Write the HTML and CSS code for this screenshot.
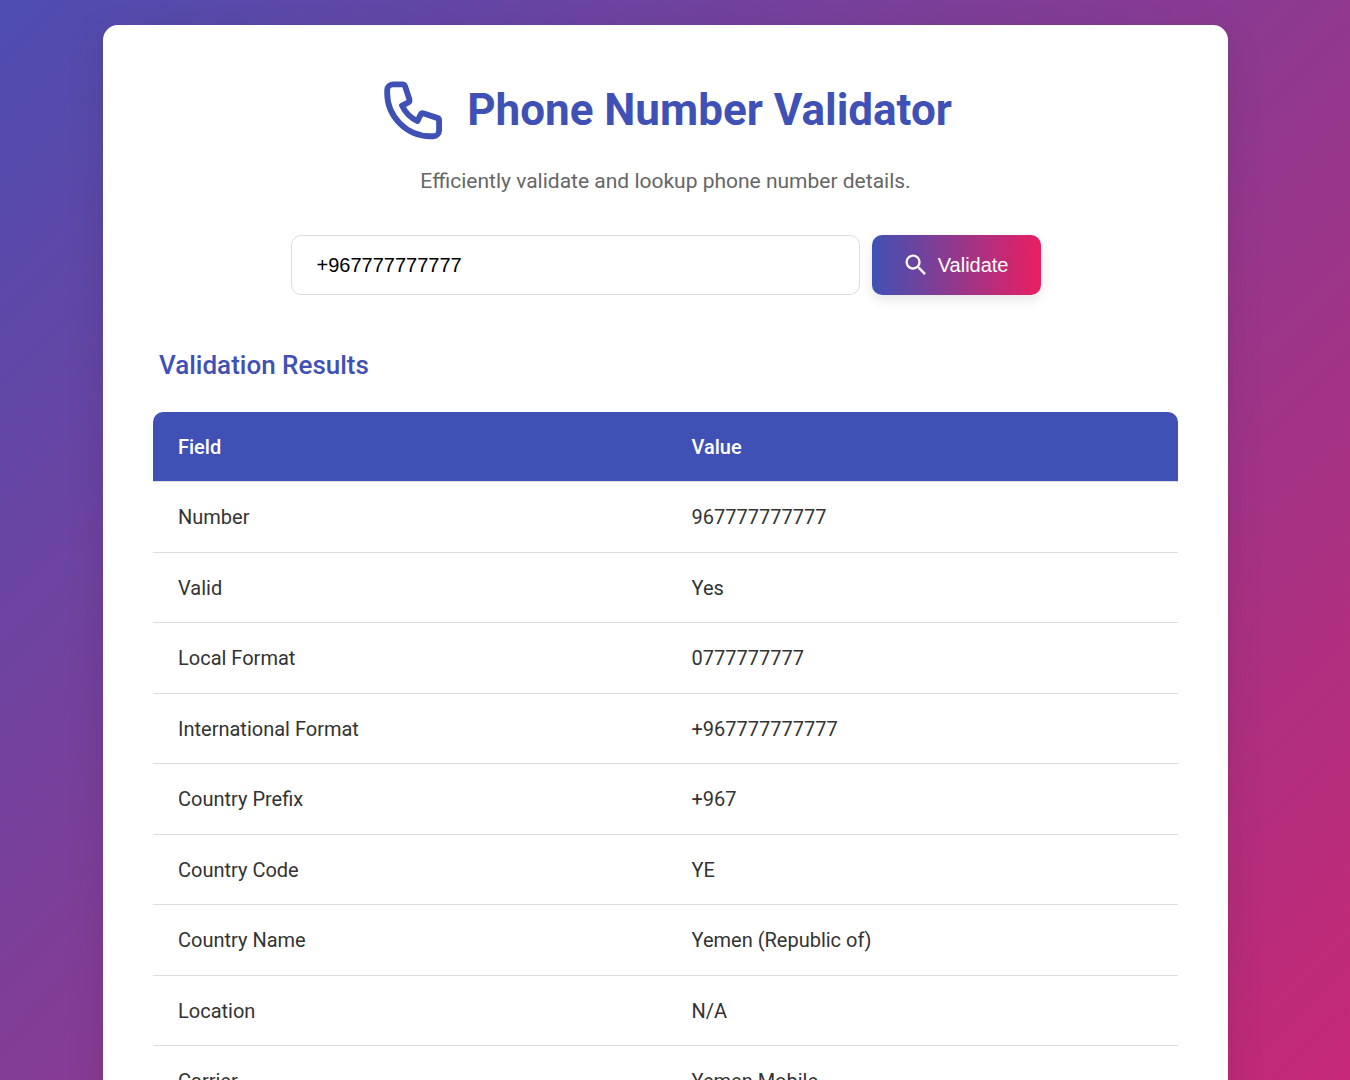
FILE: index.html
```html
<!DOCTYPE html>
<html lang="en">
<head>
<meta charset="utf-8">
<meta name="viewport" content="width=device-width, initial-scale=1">
<title>Phone Number Validator</title>
<link rel="stylesheet" href="styles.css">
</head>
<body>
<main class="container">
  <header class="header">
    <h1 class="title">
      <svg class="phone-icon" viewBox="0.3 0.3 24 24" aria-hidden="true"><path d="M5.1 3.5H8.3A1 1 0 0 1 9.25 4.2L10.7 8.6A1 1 0 0 1 10.2 9.8L8.2 10.8A11 11 0 0 0 13.5 16.1L14.5 14A1 1 0 0 1 15.7 13.5L20.2 15A1 1 0 0 1 20.9 16V19.3A2 2 0 0 1 18.9 21.3H18C9.8 21.3 3.1 14.6 3.1 6.4V5.5A2 2 0 0 1 5.1 3.5Z"/></svg>
      Phone Number Validator
    </h1>
    <p class="subtitle">Efficiently validate and lookup phone number details.</p>
  </header>
  <form class="form">
    <input class="phone-input" type="tel" name="phone" value="+967777777777" aria-label="Phone number">
    <button class="submit" type="button">
      <svg class="search-icon" viewBox="0 0 24 24" aria-hidden="true"><path d="M15.5 14h-.79l-.28-.27A6.471 6.471 0 0 0 16 9.5 6.5 6.5 0 1 0 9.5 16c1.61 0 3.09-.59 4.23-1.57l.27.28v.79l5 4.99L20.49 19l-4.99-5zm-6 0C7.01 14 5 11.99 5 9.5S7.01 5 9.5 5 14 7.01 14 9.5 11.99 14 9.5 14z"/></svg>
      Validate
    </button>
  </form>
  <section class="results">
    <h2 class="results-title">Validation Results</h2>
    <table class="table">
      <thead><tr><th scope="col">Field</th><th scope="col">Value</th></tr></thead>
      <tbody>
        <tr><td>Number</td><td>967777777777</td></tr>
        <tr><td>Valid</td><td>Yes</td></tr>
        <tr><td>Local Format</td><td>0777777777</td></tr>
        <tr><td>International Format</td><td>+967777777777</td></tr>
        <tr><td>Country Prefix</td><td>+967</td></tr>
        <tr><td>Country Code</td><td>YE</td></tr>
        <tr><td>Country Name</td><td>Yemen (Republic of)</td></tr>
        <tr><td>Location</td><td>N/A</td></tr>
        <tr><td>Carrier</td><td>Yemen Mobile</td></tr>
      </tbody>
    </table>
  </section>
</main>
</body>
</html>
```
FILE: styles.css
```css
* { box-sizing: border-box; }

body {
  height: 100vh;
  margin: 0;
  padding: 25px 19px 0 0;
  overflow: hidden;
  font-family: Roboto, sans-serif;
  font-size: 20px;
  line-height: 30px;
  color: #333;
  background: linear-gradient(135deg, #4d4db0, #c52874) fixed;
}

.container {
  max-width: 1125px;
  margin: 0 auto;
  padding: 50px;
  background: #fff;
  border-radius: 15px;
  box-shadow: 0 10px 38px rgba(0, 0, 0, 0.1);
}

.header { text-align: center; }

.title {
  display: flex;
  align-items: center;
  justify-content: center;
  gap: 18px;
  margin: 0;
  font-size: 44px;
  font-weight: 700;
  line-height: 70px;
  color: #3f51b5;
}

.phone-icon {
  width: 70px;
  height: 70px;
  fill: none;
  stroke: currentColor;
  stroke-width: 2;
  stroke-linejoin: round;
}

.subtitle {
  margin: 20px 0 38px;
  font-size: 21px;
  line-height: 32px;
  color: #666;
}

.form {
  display: flex;
  gap: 12px;
  max-width: 750px;
  margin: 0 auto;
}

.phone-input {
  flex: 1;
  min-width: 0;
  height: 60px;
  padding: 0 25px;
  border: 1px solid #ddd;
  border-radius: 10px;
  font: 20px "Liberation Sans", Arial, sans-serif;
  color: #000;
}

.submit {
  display: flex;
  align-items: center;
  gap: 8px;
  height: 60px;
  padding: 0 32px 0 30px;
  border: 0;
  border-radius: 10px;
  font: 20px "Liberation Sans", Arial, sans-serif;
  color: #fff;
  background: linear-gradient(90deg, #3f51b5, #e91e63);
  box-shadow: 0 5px 12px rgba(0, 0, 0, 0.1);
}

.search-icon {
  width: 28px;
  height: 28px;
  fill: currentColor;
}

.results { margin-top: 50px; }

.results-title {
  margin: 0;
  padding: 5px 6px 32px;
  font-size: 26px;
  font-weight: 500;
  line-height: 30px;
  color: #3f51b5;
}

.table {
  width: 100%;
  border-spacing: 0;
  border-radius: 10px;
  overflow: hidden;
  table-layout: fixed;
}

.table th,
.table td {
  height: 70px;
  padding: 0 25px;
  text-align: left;
  border-bottom: 1px solid #ddd;
}

.table th:last-child,
.table td:last-child { padding-left: 26px; }

.table th {
  font-weight: 500;
  color: #fff;
  background: #3f51b5;
  background-clip: padding-box;
}

.table tbody tr:nth-child(odd) td { height: 71px; }
```
